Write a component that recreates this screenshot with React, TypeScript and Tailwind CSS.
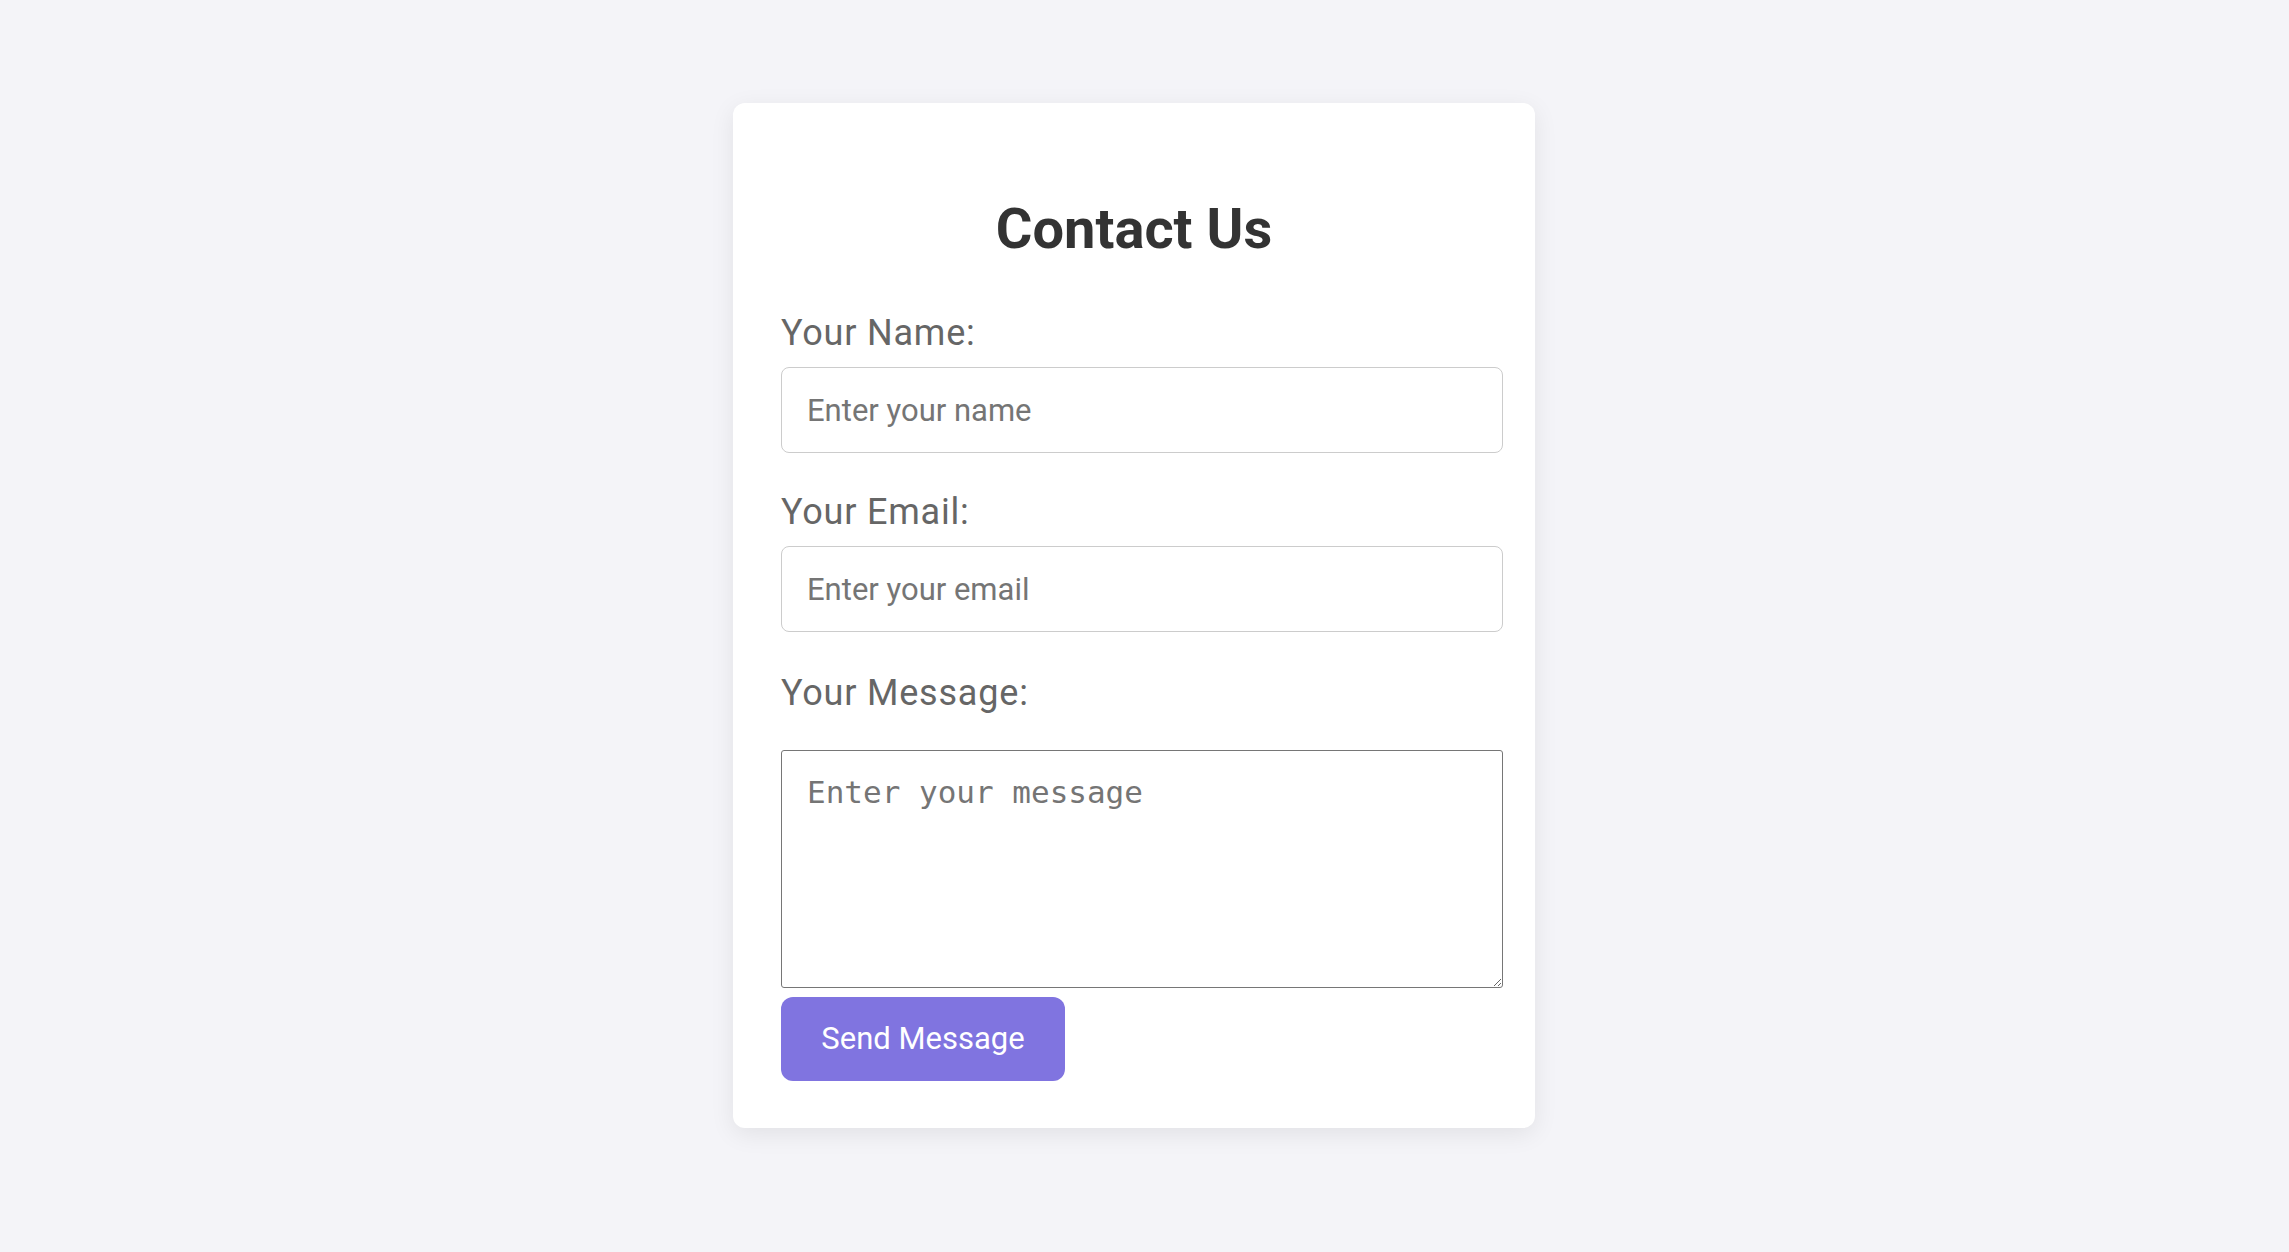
import React from "react";

export default function App() {
  return (
    <div className="min-h-screen w-full bg-[#f4f4f8] flex justify-center pr-[21px] pt-[103px] font-['Roboto',sans-serif]">
      <div className="w-[802px] h-[1025px] bg-white rounded-[12px] shadow-[0_6px_24px_rgba(0,0,0,0.08)] px-[48px] pt-[93px] flex flex-col items-start">
        <h2 className="w-full text-center text-[56px] leading-[66px] font-bold text-[#333333]">
          Contact Us
        </h2>
        <label className="mt-[51px] text-[36px] leading-[40px] tracking-[0.8px] text-[#666666]">Your Name:</label>
        <input
          type="text"
          placeholder="Enter your name"
          className="mt-[14px] w-[722px] h-[86px] border border-[#cccccc] rounded-[8px] pl-[25px] text-[31px] font-['Roboto',sans-serif] placeholder:text-[#757575] outline-none"
        />
        <label className="mt-[39px] text-[36px] leading-[40px] tracking-[0.8px] text-[#666666]">Your Email:</label>
        <input
          type="email"
          placeholder="Enter your email"
          className="mt-[14px] w-[722px] h-[86px] border border-[#cccccc] rounded-[8px] pl-[25px] text-[31px] font-['Roboto',sans-serif] placeholder:text-[#757575] outline-none"
        />
        <label className="mt-[41px] text-[36px] leading-[40px] tracking-[0.8px] text-[#666666]">Your Message:</label>
        <textarea
          placeholder="Enter your message"
          className="mt-[37px] w-[722px] h-[238px] border border-[#767676] rounded-[3px] pl-[25px] pt-[23px] text-[31px] leading-[36px] font-['DejaVu_Sans_Mono',monospace] placeholder:text-[#757575] outline-none"
        />
        <button className="mt-[9px] w-[284px] h-[84px] rounded-[12px] bg-[#8074e0] text-white text-[31px] font-['Roboto',sans-serif]">
          Send Message
        </button>
      </div>
    </div>
  );
}
